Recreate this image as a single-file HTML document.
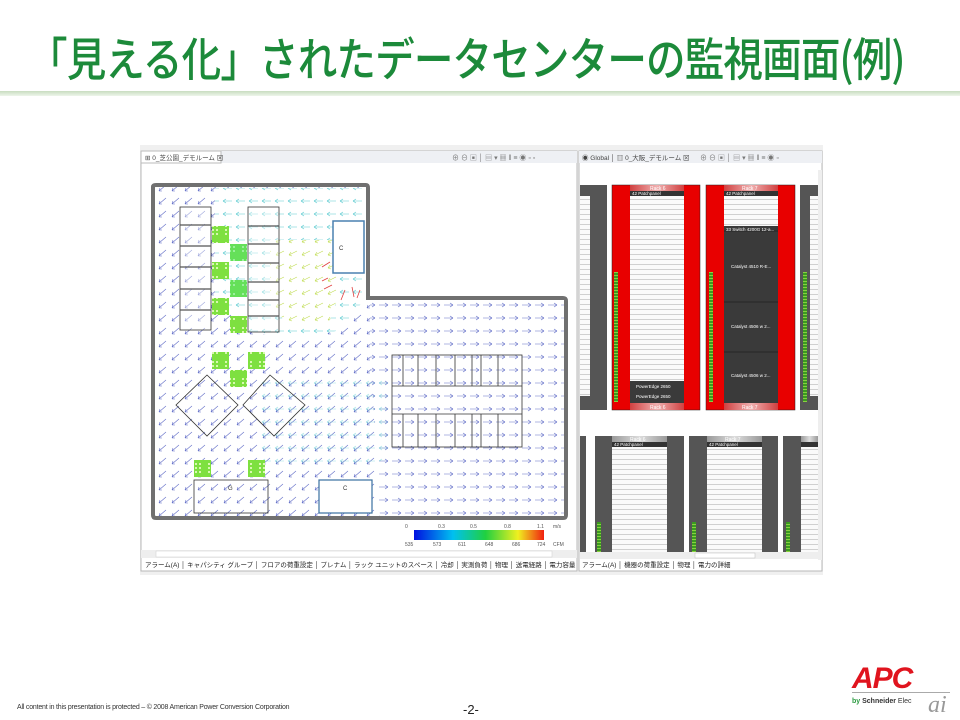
<!DOCTYPE html>
<html><head><meta charset="utf-8"><style>
body{margin:0;width:960px;height:720px;background:#fff;overflow:hidden;position:relative;font-family:"Liberation Sans","Noto Sans CJK JP",sans-serif}
.title{position:absolute;left:28px;top:30px;font-size:46px;color:#1c8a3a;font-family:"Noto Sans CJK JP",sans-serif;white-space:nowrap;letter-spacing:-1px;transform:scaleX(0.86);transform-origin:left top;line-height:54px;font-weight:500}
.line{position:absolute;left:0;top:91px;width:960px;height:5px;background:linear-gradient(#c8dcc0,#eef5ea)}
.foot{position:absolute;left:17px;top:704px;font-size:7px;color:#333;letter-spacing:-0.2px}
.pg{position:absolute;left:463px;top:702px;font-size:13px;color:#222}
</style></head><body>
<div class="title">「見える化」されたデータセンターの監視画面(例)</div>
<div class="line"></div>
<svg width="960" height="720" style="position:absolute;left:0;top:0" font-family="Liberation Sans, Noto Sans CJK JP, sans-serif">
<defs>
<pattern id="ab" width="13" height="13" patternUnits="userSpaceOnUse"><path d="M10 3L3 9M3 9l1-3M3 9l3 0" stroke="#6470c8" stroke-width="0.6" fill="none"/></pattern>
<pattern id="ab2" width="13" height="13" patternUnits="userSpaceOnUse"><path d="M2 6L11 6M11 6l-3-2M11 6l-3 2" stroke="#6470c8" stroke-width="0.6" fill="none"/></pattern>
<pattern id="ac" width="13" height="13" patternUnits="userSpaceOnUse"><path d="M11 6L2 6M2 6l3-2M2 6l3 2" stroke="#5ccad0" stroke-width="0.6" fill="none"/></pattern>
<pattern id="ay" width="13" height="13" patternUnits="userSpaceOnUse"><path d="M11 4L3 8M3 8l2-3M3 8l3 1" stroke="#c0dc50" stroke-width="0.6" fill="none"/></pattern>
<pattern id="gt" width="17" height="17" patternUnits="userSpaceOnUse"><rect width="17" height="17" fill="#7ee040"/><g fill="#d8f8b0"><rect x="4" y="4" width="2" height="2"/><rect x="8" y="4" width="2" height="2"/><rect x="12" y="4" width="2" height="2"/><rect x="4" y="8" width="2" height="2"/><rect x="8" y="8" width="2" height="2"/><rect x="12" y="8" width="2" height="2"/><rect x="4" y="12" width="2" height="2"/><rect x="8" y="12" width="2" height="2"/><rect x="12" y="12" width="2" height="2"/></g></pattern>
<linearGradient id="cb" x1="0" x2="1"><stop offset="0" stop-color="#0010e0"/><stop offset="0.3" stop-color="#00c0f0"/><stop offset="0.55" stop-color="#20d040"/><stop offset="0.8" stop-color="#f0f020"/><stop offset="1" stop-color="#f02010"/></linearGradient>
<linearGradient id="rh" x1="0" x2="1"><stop offset="0" stop-color="#999"/><stop offset="0.5" stop-color="#ddd"/><stop offset="1" stop-color="#999"/></linearGradient>
<linearGradient id="rr" x1="0" x2="1"><stop offset="0" stop-color="#d04040"/><stop offset="0.5" stop-color="#f0b0b0"/><stop offset="1" stop-color="#d04040"/></linearGradient>
<pattern id="rows" width="10" height="5" patternUnits="userSpaceOnUse"><rect width="10" height="5" fill="#fafafa"/><rect y="4" width="10" height="1" fill="#d0d0d0"/></pattern>
<pattern id="gl" width="4" height="3" patternUnits="userSpaceOnUse"><rect width="4" height="3" fill="#3a9a20"/><rect y="2" width="4" height="1" fill="#8ad040"/></pattern>
</defs>
<rect x="140" y="145" width="683" height="430" fill="#f0f0f0"/>
<rect x="141" y="151" width="436" height="420" fill="#fff" stroke="#b8b8b8"/>
<rect x="141" y="151" width="436" height="12" fill="#eef0f4"/>
<rect x="141" y="151" width="80" height="12" fill="#fff" stroke="#bbb"/>
<text x="145" y="160" font-size="6.5" fill="#444">⊞ 0_芝公園_デモルーム ⊠</text>
<text x="452" y="160" font-size="7" fill="#777">⊕ ⊖ ▣ │ ▤ ▾ ▦ ǁ ≡ ◉ ▫ ▫</text>
<path d="M153 187Q153 185 156 185L366 185Q368 185 368 188L368 298L563 298Q566 298 566 301L566 515Q566 518 563 518L156 518Q153 518 153 515Z" fill="#fff" stroke="#707070" stroke-width="4"/>
<path d="M155 187L366 187L366 300L564 300L564 516L155 516Z" fill="url(#ab)"/>
<path d="M370 300L564 300L564 516L380 516L370 350Z" fill="#fff"/>
<path d="M370 300L564 300L564 516L380 516L370 350Z" fill="url(#ab2)"/>
<path d="M215 188L364 188L364 300L340 330L300 340L250 332L215 300Z" fill="#fff"/>
<path d="M215 188L364 188L364 300L340 330L300 340L250 332L215 300Z" fill="url(#ac)"/>
<path d="M270 240L332 240L340 290L330 320L290 330L270 300Z" fill="#fff"/>
<path d="M270 240L332 240L340 290L330 320L290 330L270 300Z" fill="url(#ay)"/>
<path d="M260 380L390 380L390 460L300 470L260 470Z" fill="url(#ac)" opacity="0.6"/>
<g stroke="#e04040" stroke-width="0.8" fill="none"><path d="M330 262l-8 5M328 278l-6 3M332 285l-8 4M345 290l-4 10M352 287l2 10M360 290l-3 8"/></g>
<g fill="#fff" fill-opacity="0.4" stroke="#333" stroke-width="0.8">
<rect x="180" y="207" width="31" height="123"/><rect x="248" y="207" width="31" height="125"/>
</g>
<g stroke="#555" stroke-width="1.3"><path d="M180 225h31M180 246h31M180 267h31M180 289h31M180 310h31M248 226h31M248 244h31M248 263h31M248 282h31M248 300h31M248 316h31"/></g>
<rect x="333" y="221" width="31" height="52" fill="#fff" stroke="#4a80b0" stroke-width="1.5"/>
<text x="339" y="250" font-size="6" fill="#333">C</text>
<g fill="url(#gt)"><rect x="212" y="226" width="17" height="17"/><rect x="230" y="244" width="17" height="17"/><rect x="212" y="262" width="17" height="17"/><rect x="230" y="280" width="17" height="17"/><rect x="212" y="298" width="17" height="17"/><rect x="230" y="316" width="17" height="17"/><rect x="212" y="352" width="17" height="17"/><rect x="248" y="352" width="17" height="17"/><rect x="230" y="370" width="17" height="17"/><rect x="194" y="460" width="17" height="17"/><rect x="248" y="460" width="17" height="17"/></g>
<rect x="230" y="244" width="17" height="17" fill="#40e080" opacity="0.4"/><rect x="230" y="280" width="17" height="17" fill="#40e080" opacity="0.4"/>
<g fill="none" stroke="#333" stroke-width="0.8">
<path d="M207 375L238 405L207 436L176 405Z"/><path d="M270 375L305 405L274 436L243 405Z"/>
<rect x="392" y="355" width="130" height="92"/><path d="M392 386h130M392 414h130M403 355v31M418 355v31M436 355v31M455 355v31M472 355v31M481 355v31M498 355v31M403 414v33M418 414v33M436 414v33M455 414v33M472 414v33M481 414v33M498 414v33"/>
<rect x="194" y="480" width="74" height="33"/></g>
<rect x="319" y="480" width="53" height="33" fill="#fff" stroke="#3a70a0" stroke-width="1.2"/>
<text x="228" y="490" font-size="6" fill="#333">G</text><text x="343" y="490" font-size="6" fill="#333">C</text>
<g font-size="5" fill="#555"><text x="405" y="528">0</text><text x="438" y="528">0.3</text><text x="470" y="528">0.5</text><text x="504" y="528">0.8</text><text x="537" y="528">1.1</text><text x="553" y="528">m/s</text>
<text x="405" y="546">535</text><text x="433" y="546">573</text><text x="458" y="546">611</text><text x="485" y="546">648</text><text x="512" y="546">686</text><text x="537" y="546">724</text><text x="553" y="546">CFM</text></g>
<rect x="414" y="530" width="130" height="10" fill="url(#cb)"/>
<rect x="141" y="550" width="436" height="8" fill="#eee"/><rect x="156" y="551" width="396" height="6" fill="#fff" stroke="#ccc" stroke-width="0.5"/>
<text x="145" y="567" font-size="6.5" fill="#222">アラーム(A) │ キャパシティ グループ │ フロアの荷重設定 │ プレナム │ ラック ユニットのスペース │ 冷却 │ 実測負荷 │ 物理 │ 送電経路 │ 電力容量</text>
<rect x="579" y="151" width="243" height="420" fill="#fff" stroke="#b8b8b8"/>
<rect x="579" y="151" width="243" height="12" fill="#eef0f4"/>
<text x="582" y="160" font-size="6.5" fill="#444">◉ Global │ ▥ 0_大阪_デモルーム ⊠</text>
<text x="700" y="160" font-size="7" fill="#777">⊕ ⊖ ▣ │ ▤ ▾ ▦ ǁ ≡ ◉ ▫</text>
<rect x="580" y="185" width="27" height="225" fill="#555"/><rect x="580" y="196" width="10" height="200" fill="url(#rows)"/>
<rect x="612" y="185" width="88" height="225" fill="#e80000" stroke="#222" stroke-width="0.5"/>
<rect x="630" y="185" width="54" height="6" fill="url(#rr)"/><text x="650" y="190" font-size="5" fill="#fff">Rack 6</text>
<rect x="630" y="191" width="54" height="5" fill="#333"/><text x="632" y="195" font-size="4.5" fill="#fff">42 Patchpanel</text>
<rect x="630" y="196" width="54" height="185" fill="url(#rows)"/>
<rect x="630" y="381" width="54" height="22" fill="#3a3a3a"/><text x="636" y="388" font-size="4.5" fill="#fff">PowerEdge 2650</text><text x="636" y="398" font-size="4.5" fill="#fff">PowerEdge 2650</text>
<rect x="630" y="403" width="54" height="7" fill="url(#rr)"/><text x="650" y="409" font-size="5" fill="#fff">Rack 6</text>
<rect x="614" y="272" width="4" height="130" fill="url(#gl)"/>
<rect x="706" y="185" width="89" height="225" fill="#e80000" stroke="#222" stroke-width="0.5"/>
<rect x="724" y="185" width="54" height="6" fill="url(#rr)"/><text x="742" y="190" font-size="5" fill="#fff">Rack 7</text>
<rect x="724" y="191" width="54" height="5" fill="#333"/><text x="726" y="195" font-size="4.5" fill="#fff">42 Patchpanel</text>
<rect x="724" y="196" width="54" height="30" fill="url(#rows)"/>
<rect x="724" y="226" width="54" height="177" fill="#3a3a3a"/>
<path d="M724 231h54M724 302h54M724 352h54" stroke="#222" stroke-width="0.7"/>
<text x="726" y="231" font-size="4.5" fill="#fff">33 Switch 4200G 12-a...</text>
<text x="731" y="268" font-size="4.5" fill="#fff">Catalyst 4510 R-E...</text>
<text x="731" y="328" font-size="4.5" fill="#fff">Catalyst 4506 w 2...</text>
<text x="731" y="377" font-size="4.5" fill="#fff">Catalyst 4506 w 2...</text>
<rect x="724" y="403" width="54" height="7" fill="url(#rr)"/><text x="742" y="409" font-size="5" fill="#fff">Rack 7</text>
<rect x="709" y="272" width="4" height="130" fill="url(#gl)"/>
<rect x="800" y="185" width="18" height="225" fill="#555"/><rect x="810" y="196" width="8" height="200" fill="url(#rows)"/><rect x="803" y="272" width="4" height="130" fill="url(#gl)"/>
<rect x="818" y="170" width="4" height="390" fill="#eee"/>
<rect x="580" y="436" width="6" height="116" fill="#555"/>
<rect x="595" y="436" width="89" height="116" fill="#555"/><rect x="612" y="436" width="55" height="6" fill="url(#rh)"/><text x="630" y="441" font-size="5" fill="#fff">Rack 6</text><rect x="612" y="442" width="55" height="5" fill="#333"/><text x="614" y="446" font-size="4.5" fill="#fff">42 Patchpanel</text><rect x="612" y="447" width="55" height="105" fill="url(#rows)"/><rect x="597" y="522" width="4" height="30" fill="url(#gl)"/>
<rect x="689" y="436" width="89" height="116" fill="#555"/><rect x="707" y="436" width="55" height="6" fill="url(#rh)"/><text x="725" y="441" font-size="5" fill="#fff">Rack 7</text><rect x="707" y="442" width="55" height="5" fill="#333"/><text x="709" y="446" font-size="4.5" fill="#fff">42 Patchpanel</text><rect x="707" y="447" width="55" height="105" fill="url(#rows)"/><rect x="692" y="522" width="4" height="30" fill="url(#gl)"/>
<rect x="783" y="436" width="35" height="116" fill="#555"/><rect x="801" y="436" width="17" height="6" fill="url(#rh)"/><rect x="801" y="442" width="17" height="5" fill="#333"/><rect x="801" y="447" width="17" height="105" fill="url(#rows)"/><rect x="786" y="522" width="4" height="30" fill="url(#gl)"/>
<rect x="580" y="552" width="240" height="7" fill="#eee"/><rect x="695" y="553" width="60" height="5" fill="#fff" stroke="#bbb" stroke-width="0.5"/>
<text x="582" y="567" font-size="6.5" fill="#222">アラーム(A) │ 機器の荷重設定 │ 物理 │ 電力の詳細</text>
<text x="852" y="688" font-size="30" font-weight="bold" font-style="italic" fill="#e0141e" font-family="Liberation Sans, sans-serif" letter-spacing="-1">APC</text>
<rect x="852" y="692" width="98" height="1" fill="#aaa"/>
<text x="852" y="703" font-size="7" fill="#333" font-weight="bold"><tspan fill="#2a9a40">by</tspan> Schneider <tspan font-weight="normal">Elec</tspan></text>
<text x="928" y="712" font-size="24" font-style="italic" fill="#999" font-family="Liberation Serif, serif">ai</text>
</svg>
<div class="foot">All content in this presentation is protected – © 2008 American Power Conversion Corporation</div>
<div class="pg">-2-</div>
</body></html>
